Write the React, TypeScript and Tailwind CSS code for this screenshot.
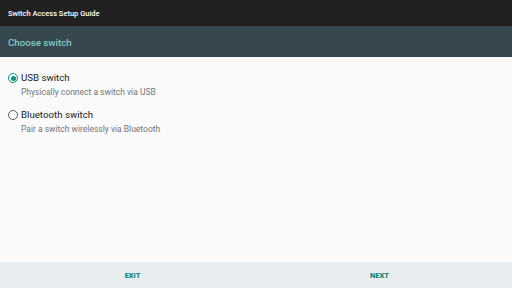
import React from "react";

function Radio({ checked }: { checked: boolean }) {
  return (
    <span
      className={`flex h-[10px] w-[10px] shrink-0 items-center justify-center rounded-full border-[1.5px] ${
        checked ? "border-[#009688]" : "border-[#5f5f5f]"
      }`}
    >
      {checked && <span className="h-[5px] w-[5px] rounded-full bg-[#009688]" />}
    </span>
  );
}

function Option({ checked, title, desc }: { checked: boolean; title: string; desc: string }) {
  return (
    <div className="flex flex-col">
      <div className="flex h-[16px] items-center gap-[3px]">
        <Radio checked={checked} />
        <span className="text-[9.7px] leading-none text-[#212121]">{title}</span>
      </div>
      <div className="pl-[13px] text-[8.5px] leading-[12px] text-[#757575]">{desc}</div>
    </div>
  );
}

export default function App() {
  return (
    <div
      className="flex h-[288px] w-[512px] flex-col bg-[#fafafa]"
      style={{ fontFamily: "Roboto, 'Noto Sans', sans-serif" }}
    >
      <div className="flex h-[26px] items-center bg-[#212121] px-[8px] pt-[2px] text-[7.5px] font-medium text-white">
        Switch Access Setup Guide
      </div>
      <div className="flex h-[31px] items-center bg-[#37474f] px-[8px] pt-[3px] text-[9.7px] font-medium text-[#80cbc4]">
        Choose switch
      </div>
      <div className="flex flex-1 flex-col gap-[9px] px-[8px] pt-[13px]">
        <Option checked title="USB switch" desc="Physically connect a switch via USB" />
        <Option checked={false} title="Bluetooth switch" desc="Pair a switch wirelessly via Bluetooth" />
      </div>
      <div className="grid h-[26px] grid-cols-2 bg-[#e9edf0] px-[9px] pt-[1px] text-[7.5px] font-bold text-[#00796b]">
        <div className="flex items-center justify-center">EXIT</div>
        <div className="flex items-center justify-center">NEXT</div>
      </div>
    </div>
  );
}
